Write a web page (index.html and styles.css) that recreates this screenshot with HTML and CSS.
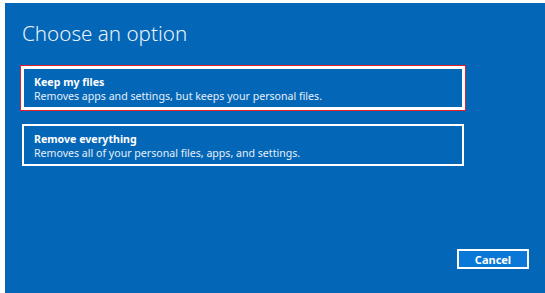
FILE: index.html
```html
<!DOCTYPE html>
<html>
<head>
<meta charset="utf-8">
<link rel="stylesheet" href="styles.css">
</head>
<body>
<div class="screen">
  <h1 class="title">Choose an option</h1>
  <div class="options">
    <div class="option focused">
      <div class="opt-title">Keep my files</div>
      <div class="opt-desc">Removes apps and settings, but keeps your personal files.</div>
    </div>
    <div class="option">
      <div class="opt-title">Remove everything</div>
      <div class="opt-desc">Removes all of your personal files, apps, and settings.</div>
    </div>
  </div>
  <div class="footer">
    <button class="cancel">Cancel</button>
  </div>
</div>
</body>
</html>
```
FILE: styles.css
```css
html, body {
  margin: 0;
  padding: 0;
  background: #ffffff;
}
body {
  width: 545px;
  height: 293px;
  overflow: hidden;
  font-family: "Noto Sans", "Open Sans", sans-serif;
}
.screen {
  margin: 3px 0 0 5px;
  height: 290px;
  background: #0466b6;
  color: #ffffff;
  padding: 0 0 0 17px;
  box-sizing: border-box;
  display: flex;
  flex-direction: column;
}
.title {
  margin: 0;
  padding-top: 17px;
  font-size: 20.6px;
  font-weight: 300;
  line-height: 26px;
  color: #e8f2fb;
}
.options {
  margin-top: 21px;
  display: flex;
  flex-direction: column;
  gap: 15px;
  width: 442px;
}
.option {
  border: 2px solid #ffffff;
  padding: 6px 10px 5px;
  height: 42px;
  box-sizing: border-box;
}
.option.focused {
  box-shadow: 0 0 0 1px #ffffff, 0 0 0 2px #e0202a;
}
.opt-title {
  font-size: 10.6px;
  font-weight: 700;
  line-height: 14px;
}
.opt-desc {
  font-size: 10.6px;
  line-height: 14px;
  color: #e6f0fa;
}
.footer {
  margin-top: auto;
  margin-bottom: 24px;
  display: flex;
  justify-content: flex-end;
  padding-right: 16px;
}
.cancel {
  width: 72px;
  height: 20px;
  background: #0a78d6;
  border: 2px solid #ffffff;
  color: #ffffff;
  font-family: "Noto Sans", "Open Sans", sans-serif;
  font-weight: 700;
  font-size: 11px;
  padding: 0;
}
```
